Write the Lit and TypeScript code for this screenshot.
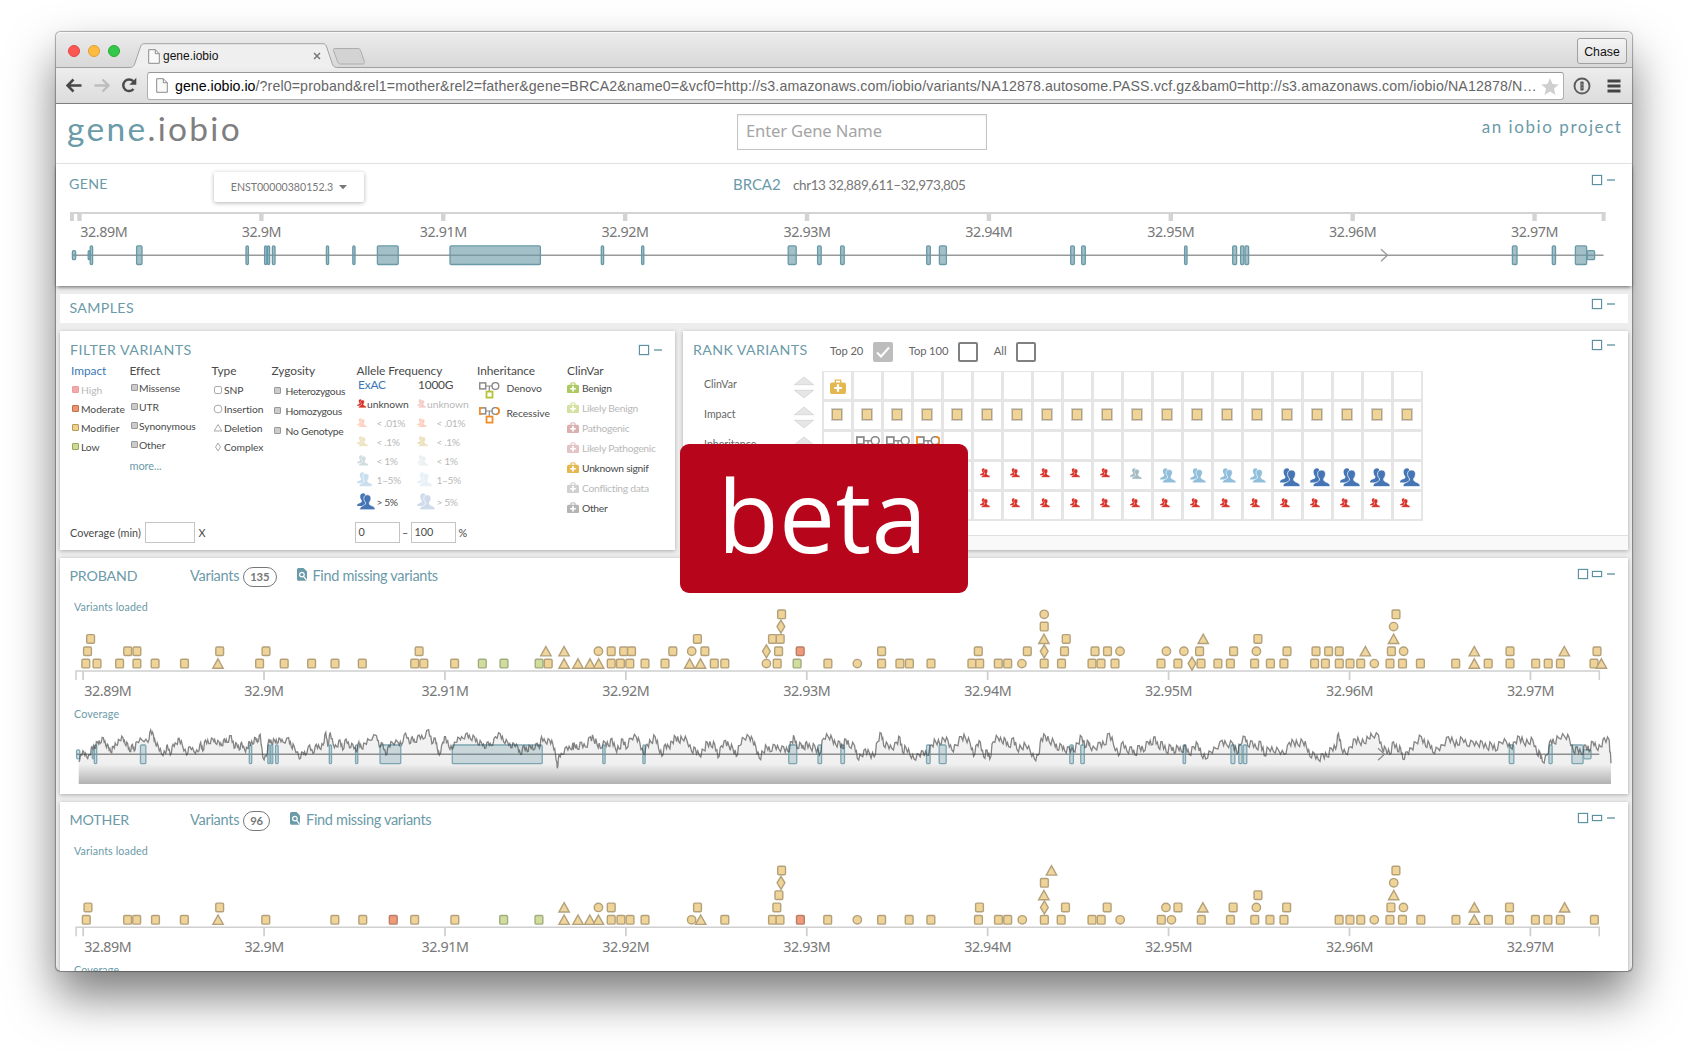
import { LitElement, html, svg, css, nothing } from "lit";
import { customElement, property } from "lit/decorators.js";

const TEAL = "#6b9aa8";

/* ---------- shared glyphs ---------- */

const people = (size: number, color: string, opacity = 1) => html`
  <svg width=${size} height=${size * 0.95} viewBox="0 0 20 19" style="opacity:${opacity}" fill=${color}>
    <path d="M7.4 0.3C4.6 0.3 3.4 2 3.6 4.2c0 1.900 1 3.300 1.800 4.200 0 1.500-.4 2-1.900 2.600C1.700 11.800 0 12 0 14.400h9V1z" />
    <path stroke="#fff" stroke-width="0.700" d="M11.500 2c3 0 4.100 1.800 3.900 4.400-.1 2-1 3.200-1.800 4.200 0 1.900.5 2.700 2.200 3.400 2.200.9 4.200 1.400 4.400 4.600H3c.2-3.200 2-3.700 4.200-4.600 1.700-.7 2.200-1.500 2.200-3.400-.8-1-1.700-2.200-1.800-4.200C7.400 3.800 8.500 2 11.500 2z" />
  </svg>`;

const kit = (size: number, color: string) => html`
  <svg width=${size} height=${size * 0.94} viewBox="0 0 16 15">
    <path d="M5.300 4V1.200h5.400V4" fill="none" stroke=${color} stroke-width="1.300" />
    <rect x="0" y="3.500" width="16" height="11.500" rx="2" fill=${color} />
    <path d="M8 5.200v7.600M4.200 9h7.600" stroke="#fff" stroke-width="2.200" />
  </svg>`;

const pedigree = (w: number, kind: "denovo" | "recessive") => {
  const rec = kind === "recessive";
  const g = "#8a8a8a";
  const o = "#f28c28";
  return html`
    <svg width=${w} height=${w * 0.8} viewBox="0 0 20.500 16.400" fill="none" stroke-width="1.500">
      <path d="M7 4h6.500M10.300 4v5.500" stroke=${g} stroke-width="1.200" />
      <rect x="0.700" y="0.900" width="6" height="6" stroke=${g} />
      <circle cx="16.400" cy="4" r="3.400" stroke=${g} stroke-width="1.400" />
      ${rec
        ? svg`<path d="M3 .9H.7v6H3" stroke=${o} stroke-width="1.600" />
            <path d="M17 .6a3.400 3.400 0 0 1 0 6.800" stroke=${o} stroke-width="1.600" />`
        : nothing}
      <rect x="7.500" y="9.600" width="6" height="6" stroke=${rec ? o : "#b5c334"} stroke-width="1.800" />
    </svg>`;
};

const pageIcon = html`
  <svg width="12" height="15" viewBox="0 0 12 15">
    <path d="M.7.700h6.600l4 4v9.600H.7z" fill="#fafafa" stroke="#8b8b8b" />
    <path d="M7.300.700v4h4" fill="none" stroke="#8b8b8b" />
  </svg>`;

/* ---------- genomic data (x is the plot coordinate) ---------- */

const EXONS: [number, number, boolean?][] = [
  [72.4, 75.6, true], [88.2, 90, true], [90.2, 92.6], [136.6, 142], [246, 248.400], [264.600, 266.800], [267.600, 269.600],
  [272.400, 275], [326.400, 328.600], [352.800, 355], [377.400, 398.200], [450, 540.400], [601.300, 603.600], [641.600, 643.800],
  [788.200, 796.200], [817.600, 821.200], [840.600, 844.200], [926.700, 930.300], [939.400, 946.400], [1070.700, 1074.300],
  [1081.700, 1085.300], [1184.600, 1187], [1232.700, 1236.600], [1240.600, 1243.800], [1245, 1248.600], [1512.400, 1517],
  [1552.300, 1555.500], [1575.400, 1586.600], [1587.200, 1594.600, true],
];

type Track = Record<string, number[]>[];

/* one entry per stacked row: s square, t triangle, c circle, d diamond, g low impact, o moderate impact */
const PROBAND: Track = [
  {
    s: [85.8, 97, 119.6, 136.9, 155.1, 184.5, 259.6, 284.2, 311.6, 335, 362.3, 414.7, 423.8, 454.6, 548.2, 611.2, 620.4, 629.8, 645,
      665, 714.3, 724.8, 777.2, 827.9, 881.6, 899.9, 909.4, 931, 971.9, 979.7, 998.3, 1007.7, 1044.2, 1061.5, 1092, 1101, 1115, 1161,
      1177.9, 1201, 1217.9, 1230.4, 1254.6, 1270.4, 1283.9, 1314.6, 1325.4, 1339.3, 1350, 1360.7, 1390, 1402.5, 1420.4, 1455.7, 1488.2,
      1510, 1535.7, 1548.2, 1560.4, 1594],
    t: [218, 564.1, 578, 590, 598.7, 689.7, 700.5, 1474.3, 1601.4],
    c: [766.4, 857.3, 1021.9, 1374.3],
    d: [1192],
    g: [482.3, 504, 539.1, 797.1],
  },
  {
    s: [87.5, 127.7, 136.9, 219.7, 266, 419.1, 611.2, 623.7, 631.5, 672.8, 704.9, 778.6, 881.6, 978.3, 1027.3, 1064.5, 1095, 1107.5,
      1199.6, 1233.6, 1287, 1316, 1328.6, 1339.3, 1391.4, 1510, 1597],
    t: [545.9, 564.1, 1365.4, 1474.3, 1564.3],
    c: [598.4, 691.7, 1120, 1166.4, 1183.9, 1256.4, 1403.6],
    d: [766.4, 1044.2],
    o: [800.2],
  },
  { s: [90.6, 697.4, 772.5, 780.2, 1066.2, 1257.9], t: [1043.9, 1203.2, 1393.6] },
  { s: [1044.2], c: [1393.6], d: [780.9] },
  { s: [781.6, 1396], c: [1044.2] },
];

const MOTHER: Track = [
  {
    s: [86.2, 127.5, 136.6, 155.4, 184.3, 265.7, 334.8, 362.7, 414.6, 454.8, 611.2, 620.9, 630, 645, 724.8, 772.5, 780, 827.7, 881.6,
      909.2, 930.9, 978.5, 998.5, 1007.7, 1044.4, 1061.2, 1092, 1101.2, 1161.3, 1201.3, 1230.5, 1254.8, 1270, 1284, 1339.2, 1350,
      1360.8, 1390, 1402.5, 1420.9, 1456, 1488.5, 1509.6, 1535.5, 1548, 1560.4, 1594.5],
    t: [218, 564.1, 578, 589.8, 598.4, 700.7, 1474.4],
    c: [691.6, 857.3, 1022.3, 1120.2, 1171.5, 1374.3],
    g: [503.6, 538.9],
    o: [393.2, 800.4],
  },
  {
    s: [87.9, 219.6, 611.2, 697.5, 776.8, 979.5, 1065.5, 1107.2, 1178, 1233.2, 1286.7, 1391, 1509.6],
    t: [564.1, 1202.9, 1474.4, 1564.7],
    c: [598.4, 1166, 1256.4, 1403.5],
    d: [1044.4],
  },
  { s: [778.9, 1258], t: [1043.9, 1393.8] },
  { s: [1044.4], c: [1393.8], d: [781] },
  { s: [781.6, 1396], t: [1051.5] },
];

/* read depth sampled in three windows: x/y pairs, scaled into the plot */
const DEPTH: { from: number; scale: number; pts: number[] }[] = [
  { from: 50, scale: 0.338, pts: [85,620,92,600,100,590,108,605,118,600,124,575,132,580,140,560,148,566,158,548,165,572,172,570,180,592,187,574,196,570,206,556,216,548,222,566,230,566,236,590,244,568,249,588,257,560,272,555,290,562,298,525,306,540,312,565,320,572,330,597,342,595,347,570,356,600,364,568,374,566,382,550,392,572,404,600,414,575,426,590,438,590,446,562,452,588,460,555,470,566,482,552,490,565,500,560,508,572,516,552,524,562,536,542,545,580,552,565,560,585,567,562,576,585,584,580,590,560,600,568,608,548,614,562,622,538,630,608,640,604,648,552,656,566,664,555,672,565,680,550,690,562,706,548,714,575,722,572,738,612,748,592,756,600,768,570,778,595,788,568,798,580,808,570,816,532,822,575,829,532,838,568,848,575,858,555,866,585,876,552,886,578,896,568,906,590,914,560,922,580,932,565,944,555,966,542,974,575,984,565,994,600,1002,572,1012,562,1030,562,1040,570,1052,534,1064,566,1072,545,1080,562,1092,540,1104,552,1120,524,1130,566,1140,550,1146,580,1152,600,1162,562,1170,545,1180,575,1190,582,1200,562,1210,548,1222,550,1234,534,1244,552,1256,545,1266,568,1276,562,1286,580,1296,560,1306,572,1318,545,1332,536,1342,560,1354,562,1364,578,1372,565,1384,575,1392,598,1402,572,1412,590,1420,572,1430,585,1442,565,1448,580,1454,545,1466,562,1478,555,1488,568,1496,600,1501,640,1506,600,1516,598,1528,575,1540,582,1550,568] },
  { from: 570, scale: 0.338, pts: [8,580,14,570,22,582,34,562,46,576,60,545,70,552,80,568,90,580,104,562,114,572,124,550,134,580,146,582,156,552,166,582,180,550,196,545,206,560,218,598,228,568,240,562,252,545,262,580,272,604,282,568,292,575,302,560,312,545,322,560,332,552,346,556,360,590,370,578,382,600,396,585,406,562,418,575,428,568,438,608,448,572,460,556,470,572,482,580,492,604,502,572,514,550,530,545,540,552,550,576,560,610,572,592,582,575,592,590,606,570,618,582,632,575,645,590,656,560,664,548,672,580,684,568,692,582,700,560,712,580,724,572,738,600,750,550,764,545,776,552,786,568,798,560,806,580,816,552,826,575,842,572,850,610,862,602,874,582,886,595,900,605,910,560,921,535,928,572,940,568,952,580,966,562,976,546,984,592,994,578,1006,600,1018,612,1032,598,1044,588,1056,600,1070,570,1082,560,1094,568,1106,552,1118,556,1130,585,1142,570,1158,545,1170,550,1184,565,1194,604,1204,568,1214,560,1224,606,1234,585,1242,612,1252,560,1266,548,1278,562,1288,552,1298,575,1312,548,1322,582,1336,580,1348,570,1362,590,1374,612,1386,600,1394,550,1406,542,1418,560,1432,562,1442,585,1454,570,1464,588,1476,575,1490,588,1502,565,1514,545,1524,578,1534,560] },
  { from: 1090, scale: 0.3571, pts: [0,575,14,580,28,562,40,570,54,535,66,570,80,602,92,560,104,590,116,575,126,600,138,572,150,590,162,560,172,570,182,545,192,578,202,560,214,592,226,572,236,595,246,575,256,590,268,570,278,598,290,575,302,568,312,600,324,612,338,590,352,580,370,556,382,568,400,565,412,596,420,570,434,545,442,572,454,558,466,580,478,560,488,602,500,580,514,590,528,585,544,598,558,562,570,560,582,568,596,560,606,575,616,605,628,595,640,615,652,596,664,605,676,580,688,582,696,535,704,580,716,595,730,575,742,552,754,560,768,565,780,550,790,542,808,540,818,580,828,580,840,598,850,560,862,590,870,580,876,612,888,590,900,580,912,562,928,545,940,575,950,565,960,592,974,580,988,570,1004,545,1018,562,1030,570,1042,550,1056,572,1072,560,1086,568,1098,560,1112,580,1124,566,1136,588,1150,562,1166,560,1178,578,1190,560,1202,545,1214,562,1228,565,1240,555,1252,598,1260,592,1267,620,1280,600,1290,555,1300,565,1312,548,1330,546,1342,548,1354,590,1364,575,1376,598,1388,570,1398,590,1408,560,1418,580,1430,575,1440,548,1454,555,1459,625] },
];

const depthLine = (() => {
  const out: string[] = [];
  let prev: [number, number] | null = null;
  let k = 0;
  for (const seg of DEPTH) {
    for (let i = 0; i < seg.pts.length; i += 2) {
      const x = seg.from + seg.pts[i] * seg.scale;
      const y = seg.pts[i + 1] / 3 - 166;
      if (prev) {
        const [px, py] = prev;
        const amp = seg.scale > 0.35 || seg.from > 500 ? 3.8 : 2.6;
        for (const f of [0.35, 0.65]) {
          const jitter = (f < 0.5 ? 1 : -1) * (0.35 + 0.65 * Math.abs(Math.sin(k * 12.9898 + f * 7))) * amp;
          out.push(`${(px + (x - px) * f).toFixed(1)},${(py + (y - py) * f + jitter).toFixed(1)}`);
        }
      }
      out.push(`${x.toFixed(1)},${y.toFixed(1)}`);
      prev = [x, y];
      k++;
    }
  }
  return out.join(" ");
})();

const exonRects = (mid: number, fillOpacity: number, map: (x: number) => number) =>
  EXONS.map(([a, b, small]) => {
    const h = small ? 9 : 18.6;
    const x = map(a);
    return svg`<rect x=${x} y=${mid - h / 2} width=${Math.max(1.2, map(b) - x)} height=${h} rx="1.2"
      fill=${TEAL} fill-opacity=${fillOpacity} stroke="#6899a7" stroke-width="1.300" />`;
  });

const LABELS = ["32.89M", "32.9M", "32.91M", "32.92M", "32.93M", "32.94M", "32.95M", "32.96M", "32.97M"];

/* ---------- window size controls ---------- */

@customElement("size-controls")
class SizeControls extends LitElement {
  @property({ type: Boolean }) wide = false;
  static styles = css`
    :host { display: flex; align-items: center; gap: 4px; height: 12px; }
    .box { width: 8px; height: 8px; border: 1px solid #5d91a1; box-shadow: 0 0 0 0.5px #c6dbe1; }
    .bar { width: 8px; height: 4px; border: 1px solid #5d91a1; box-shadow: 0 0 0 0.5px #c6dbe1; }
    .dash { width: 8px; height: 2px; background: #94b7c1; margin-left: 1px; }
  `;
  render() {
    return html`<span class="box"></span>${this.wide ? html`<span class="bar"></span>` : nothing}<span class="dash"></span>`;
  }
}

/* ---------- sample card ---------- */

@customElement("sample-card")
class SampleCard extends LitElement {
  @property() name = "";
  @property({ type: Number }) count = 0;
  @property({ type: Number }) extra = 0;
  @property({ attribute: false }) track: Track = [];

  static styles = css`
    :host { display: block; flex: none; background: #fff; box-shadow: 0 1px 4px rgba(0, 0, 0, 0.28); font-family: Lato, sans-serif; color: #6b9aa8; }
    .head { display: flex; height: 40px; align-items: flex-start; box-sizing: border-box; padding: 7px 13px 0 9.500px; line-height: 20px; }
    .name { width: 120.500px; font-size: 14.200px; letter-spacing: -0.150px; padding-top: 0.500px; }
    .variants { font-size: 14.500px; margin-right: 4px; letter-spacing: -0.280px; padding-top: 0.500px; }
    .count { box-sizing: border-box; height: 20px; border: 1px solid #777; border-radius: 10px; padding: 0 6px; font-size: 11.300px; font-weight: 700; line-height: 17px; color: #777; margin: 2px 20px 0 0; letter-spacing: -0.100px; }
    .find { display: flex; font-size: 14.500px; gap: 6px; letter-spacing: -0.320px; padding-top: 0.500px; }
    .find svg { margin-top: 2px; }
    size-controls { margin: 3px 0 0 auto; }
    .caption { font-size: 10.700px; letter-spacing: 0.120px; padding-left: 14px; }
    .loaded { height: 12px; line-height: 17px; }
    .cov { height: 16px; line-height: 17px; }
    svg { display: block; overflow: visible; }
    text { font-family: "Noto Sans", sans-serif; font-size: 14.300px; fill: #777; letter-spacing: -0.400px; }
    .bottom { height: 73px; }
  `;

  private glyph(kind: string, x: number, y: number) {
    const fill = kind === "g" ? "#d0de9d" : kind === "o" ? "#f09a7a" : "#efd397";
    const st = kind === "g" ? "#a3ab80" : kind === "o" ? "#b87f69" : "#b3a17c";
    switch (kind) {
      case "t":
        return svg`<path d="M${x} ${y - 4.8}L${x + 5.2} ${y + 4.6}H${x - 5.2}z" fill=${fill} stroke=${st} stroke-width="1.400" fill-opacity=".95" />`;
      case "c":
        return svg`<circle cx=${x} cy=${y} r="4.200" fill=${fill} stroke=${st} stroke-width="1.400" />`;
      case "d":
        return svg`<path d="M${x} ${y - 6.500}L${x + 3.9} ${y}L${x} ${y + 6.500}L${x - 3.9} ${y}z" fill=${fill} stroke=${st} stroke-width="1.400" />`;
      default:
        return svg`<rect x=${x - 3.9} y=${y - 4.300} width="7.800" height="8.600" rx="1.200" fill=${fill} stroke=${st} stroke-width="1.400" />`;
    }
  }

  render() {
    const axis = 61 + this.extra;
    const cut = (x: number) => 76.2 + (x - 72) * 0.9949;
    return html`
      <div class="head">
        <span class="name">${this.name}</span>
        <span class="variants">Variants</span>
        <span class="count">${this.count}</span>
        <span class="find">
          <svg width="10" height="13" viewBox="0 0 10 13">
            <path d="M0 1.500Q0 0 1.500 0h5L10 3.500v8q0 1-1.500 1.300h-7Q0 12.800 0 11.300z" fill=${TEAL} />
            <circle cx="4.900" cy="6.600" r="2.300" fill="none" stroke="#fff" stroke-width="1.200" />
            <path d="M6.500 8.400l3 3.600" stroke="#fff" stroke-width="1.200" />
          </svg>
          <span>Find missing variants</span>
        </span>
        <size-controls wide></size-controls>
      </div>
      <div class="caption loaded">Variants loaded</div>
      <svg width="1568" height=${95 + this.extra} viewBox="60 0 1568 ${95 + this.extra}">
        <path d="M76 ${axis + 9}V${axis}H1599.300V${axis + 9}" fill="none" stroke="#d0d0d0" stroke-width="1.600" />
        ${LABELS.map((l, i) => {
          const x = 83.1 + i * 180.92;
          return svg`<path d="M${x} ${axis}v9" stroke="#d0d0d0" stroke-width="1.800" />
            <text x=${i === 0 ? 107.8 : x} y=${axis + 25.3} text-anchor="middle">${l}</text>`;
        })}
        ${this.track.map((row, r) =>
          Object.entries(row).map(([kind, xs]) => xs.map((x) => this.glyph(kind, x, axis - 7.400 - r * 12.330))),
        )}
      </svg>
      <div class="caption cov">Coverage</div>
      <svg class="bottom" width="1568" height="73" viewBox="60 0 1568 73">
        <defs>
          <linearGradient id="depth" gradientUnits="userSpaceOnUse" x1="0" x2="0" y1="0" y2="63">
            <stop offset="0" stop-color="#f3f3f3" /><stop offset=".68" stop-color="#f0f0f0" /><stop offset="1" stop-color="#b2b2b2" />
          </linearGradient>
        </defs>
        <polygon points="78.700,63 ${depthLine} 1611,63" fill="url(#depth)" />
        <path d="M76 33.300H1599.300" stroke="#8d8d8d" stroke-width="1.400" />
        <path d="M1378 27.300l6.500 6-6.500 6" fill="none" stroke="#8d8d8d" stroke-width="1.200" />
        <g opacity=".85">${exonRects(33.3, 0.35, cut)}</g>
        <polyline points=${depthLine} fill="none" stroke="#3c3c3c" stroke-opacity=".62" stroke-width="1.300" />
      </svg>`;
  }
}

/* ---------- filter card ---------- */

@customElement("filter-card")
class FilterCard extends LitElement {
  static styles = css`
    :host { display: flex; flex-direction: column; box-sizing: border-box; width: 615px; height: 219px; background: #fff; box-shadow: 0 1px 4px rgba(0, 0, 0, 0.28); padding: 9px 13px 7px 11px; font-family: Lato, sans-serif; color: #4a4a4a; }
    svg { display: block; flex: none; }
    .top { display: flex; justify-content: space-between; height: 22px; line-height: 20px; font-size: 14.200px; letter-spacing: 0.500px; color: #6b9aa8; }
    .top span { margin-left: -1px; }
    size-controls { margin-top: 4px; }
    .cols { display: grid; grid-template-columns: 58.500px 82px 60px 85px 120.500px 90px 1fr; }
    h4 { margin: 0; font-size: 11.900px; font-weight: 400; line-height: 18px; height: 16px; white-space: nowrap; letter-spacing: -0.050px; }
    .on { color: #3a78b5; }
    .list { display: flex; flex-direction: column; font-size: 10.300px; white-space: nowrap; letter-spacing: -0.050px; }
    .item { display: flex; align-items: center; height: 19px; flex: none; }
    .tall .item { height: 20px; }
    .impact { padding-top: 2.500px; }
    .effect { padding-top: 0.500px; letter-spacing: -0.100px; }
    .type { padding-top: 2.500px; }
    .zyg { padding-top: 2.500px; letter-spacing: -0.250px; }
    .sq { width: 5px; height: 5px; border: 1px solid #999; background: #ccc; border-radius: 1px; flex: none; }
    .impact .sq { margin: 0 2px 2px 1px; }
    .effect .sq { margin: 0 1.500px 2px 1px; }
    .zyg .sq { margin: 0 4.500px 1px 2.500px; }
    .type svg { width: 12px; margin-right: 0.500px; }
    .sq.high { background: #f2a9a9; border-color: #eb9d9d; }
    .sq.moderate { background: #f0936f; border-color: #c0704f; }
    .sq.modifier { background: #efd18b; border-color: #b49a5c; }
    .sq.low { background: #cddc91; border-color: #96a560; }
    .off { color: #b9b9b9; }
    .more { font-size: 11px; color: #6b9aa8; padding-top: 1px; }
    .pair { display: grid; grid-template-columns: 60px 1fr; }
    .pair h4 { margin-top: -2px; height: 18px; padding-left: 1.500px; letter-spacing: -0.200px; }
    .freq .item { gap: 0; letter-spacing: -0.450px; }
    .freq .item:first-child { letter-spacing: -0.050px; }
    .freq .ico { width: 20px; }
    .freq .first { width: 10.500px; }
    .freq .last { height: 25px; }
    .inh .item { height: 25px; gap: 7px; }
    .inh .item span { margin-top: -5px; }
    .inh { padding-left: 2px; }
    .clin .item { gap: 3px; letter-spacing: -0.280px; }
    .clin { margin-top: -0.500px; }
    .foot { display: flex; margin-top: auto; height: 21px; align-items: center; font-size: 10.800px; }
    .field { box-sizing: border-box; height: 21px; border: 1px solid #c4c4c4; line-height: 18px; padding-left: 3px; }
    .cov { width: 50px; margin: 0 4px 0 1px; }
    .num { width: 45px; }
    .lead { width: 73.500px; margin-left: -1px; letter-spacing: 0.030px; }
    .min { margin-left: 149px; }
    .sep { width: 11px; text-align: center; }
    .pct { margin-left: 3px; }
  `;
  render() {
    const item = (cls: string, text: string, off = false) =>
      html`<div class="item"><span class="sq ${cls}"></span><span class=${off ? "off" : ""}>${text}</span></div>`;
    const shape = (d: unknown, text: string) =>
      html`<div class="item"><svg width="12" height="11" viewBox="0 0 12 11" fill="#fff" stroke="#aaa">${d}</svg><span>${text}</span></div>`;
    const freq: [string, number, string][] = [
      ["unknown", 9.5, "#d73027"], ["< .01%", 10, "#fbb394"], ["< .1%", 11, "#e2cf98"], ["< 1%", 11.5, "#b3c6cb"], ["1–5%", 15.5, "#a8cbe4"], ["> 5%", 18, "#4575b4"],
    ];
    const freqCol = (second: boolean) => html`
      <div class="list freq">
        ${freq.map(([t, s, c], i) => {
          const live = !second && (i === 0 || i === 5);
          const op = live ? 1 : second && (i === 0 || i > 2) ? 0.25 : second ? 0.62 : 0.6;
          return html`<div class="item ${i === 5 ? "last" : ""}">
            <span class="ico ${i === 0 ? "first" : ""}">${people(s, c, op)}</span>
            <span class=${live ? "" : "off"}>${t}</span></div>`;
        })}
      </div>`;
    const clin: [string, string, boolean][] = [
      ["Benign", "#adca62", false], ["Likely Benign", "#d3e2a2", true], ["Pathogenic", "#d9b1b1", true], ["Likely Pathogenic", "#e2c4c7", true],
      ["Unknown signif", "#e4b751", false], ["Conflicting data", "#d0d0d0", true], ["Other", "#b5b5b5", false],
    ];
    return html`
      <div class="top"><span>FILTER VARIANTS</span><size-controls></size-controls></div>
      <div class="cols">
        <div><h4 class="on">Impact</h4>
          <div class="list impact">${item("high", "High", true)}${item("moderate", "Moderate")}${item("modifier", "Modifier")}${item("low", "Low")}</div></div>
        <div><h4>Effect</h4>
          <div class="list effect">${["Missense", "UTR", "Synonymous", "Other"].map((t) => item("", t))}<div class="item more">more...</div></div></div>
        <div><h4>Type</h4>
          <div class="list type">
            ${shape(svg`<rect x="2.500" y="1.500" width="7" height="7" rx="1.500" />`, "SNP")}
            ${shape(svg`<circle cx="6" cy="5" r="3.900" />`, "Insertion")}
            ${shape(svg`<path d="M6 1.500l3.800 6.500H2.200z" />`, "Deletion")}
            ${shape(svg`<path d="M6 1l2.500 4L6 9 3.500 5z" />`, "Complex")}
          </div></div>
        <div><h4>Zygosity</h4>
          <div class="list zyg tall">${["Heterozygous", "Homozygous", "No Genotype"].map((t) => item("", t))}</div></div>
        <div><h4>Allele Frequency</h4>
          <div class="pair"><h4 class="on">ExAC</h4><h4>1000G</h4>${freqCol(false)}${freqCol(true)}</div></div>
        <div><h4>Inheritance</h4>
          <div class="list inh">
            <div class="item">${pedigree(20.5, "denovo")}<span>Denovo</span></div>
            <div class="item">${pedigree(20.5, "recessive")}<span>Recessive</span></div>
          </div></div>
        <div><h4>ClinVar</h4>
          <div class="list clin tall">${clin.map(([t, c, off]) => html`<div class="item">${kit(12, c)}<span class=${off ? "off" : ""}>${t}</span></div>`)}</div></div>
      </div>
      <div class="foot">
        <span class="lead">Coverage (min)</span><span class="field cov"></span><span>X</span>
        <span class="field num min">0</span><span class="sep">–</span><span class="field num">100</span><span class="pct">%</span>
      </div>`;
  }
}

/* ---------- rank card ---------- */

@customElement("rank-card")
class RankCard extends LitElement {
  static styles = css`
    :host { display: flex; flex-direction: column; box-sizing: border-box; width: 945px; height: 219px; background: #fff; box-shadow: 0 1px 4px rgba(0, 0, 0, 0.28); font-family: Lato, sans-serif; color: #666; }
    svg { display: block; }
    .top { display: flex; height: 40px; box-sizing: border-box; padding: 9px 13px 0 10px; line-height: 20px; font-size: 11.200px; letter-spacing: -0.080px; }
    .title { width: 137px; font-size: 14.200px; letter-spacing: 0.380px; color: #6b9aa8; }
    .box { box-sizing: border-box; width: 20px; height: 20px; border: 2px solid #808080; border-radius: 2px; margin: 2px 16px 0 9.500px; }
    .checked { border: none; background: #bdbdbd; }
    .opt { padding-top: 0.500px; }
    size-controls { margin: -1px 0 0 auto; }
    .body { display: flex; flex: 1; padding-left: 21px; }
    .labels { width: 118px; padding-top: 1px; }
    .label { display: flex; height: 30px; justify-content: space-between; font-size: 10.600px; line-height: 25px; padding-right: 8px; }
    .label svg { margin-top: 3.500px; }
    .grid { display: grid; grid-template-columns: repeat(20, 27px); grid-auto-rows: 27px; gap: 3px; padding: 1px 2px 2px; background: #e5e5e5; align-self: flex-start; }
    .cell { background: #fff; display: flex; align-items: flex-start; }
    .imp { padding: 7px 0 0 8px; }
    .freq { padding: 6px 0 0 6px; }
    .kit { padding: 7px 0 0 6px; }
    .ped { padding: 4px 0 0 1.500px; }
    .sq { width: 8px; height: 9px; background: #efd397; border: 1px solid #b3a17c; box-shadow: 0 0 0 1px #d2d2d2; }
    .foot { height: 14px; background: #f9f9f9; border-top: 1px solid #e0e0e0; }
  `;
  render() {
    const sorter = html`<svg width="20" height="22" viewBox="0 0 20 22">
      <path d="M10 1L19.500 8.700H.5zM.5 14.300h19L10 22z" fill="#e6e6e6" stroke="#cfcfcf" stroke-width=".7" /></svg>`;
    const cells = [];
    for (let r = 0; r < 5; r++) {
      for (let c = 0; c < 20; c++) {
        let inner: unknown = nothing;
        let cls = "";
        if (r === 0 && c === 0) { inner = kit(16, "#e4b751"); cls = "kit"; }
        if (r === 1) { inner = html`<span class="sq"></span>`; cls = "imp"; }
        if (r === 2 && c > 0 && c < 4) { inner = pedigree(24, c === 3 ? "recessive" : "denovo"); cls = "ped"; }
        if (r > 2 && c > 4) {
          cls = "freq";
          inner = r === 4 || c < 10 ? people(10, "#d73027") : c === 10 ? people(12, "#a3bcc3") : c < 15 ? people(16, "#91bfdb") : people(20, "#4575b4");
        }
        cells.push(html`<div class="cell ${cls}">${inner}</div>`);
      }
    }
    return html`
      <div class="top">
        <span class="title">RANK VARIANTS</span>
        <span class="opt">Top 20</span>
        <span class="box checked"><svg width="20" height="20" viewBox="0 0 20 20"><path d="M4 10.500l4 4 8-9" fill="none" stroke="#fff" stroke-width="2" /></svg></span>
        <span class="opt">Top 100</span><span class="box"></span>
        <span class="opt">All</span><span class="box"></span>
        <size-controls></size-controls>
      </div>
      <div class="body">
        <div class="labels">${["ClinVar", "Impact", "Inheritance"].map((t) => html`<div class="label"><span>${t}</span>${sorter}</div>`)}</div>
        <div class="grid">${cells}</div>
      </div>
      <div class="foot"></div>`;
  }
}

/* ---------- page ---------- */

@customElement("app-root")
class AppRoot extends LitElement {
  static styles = css`
    :host { display: block; position: relative; box-sizing: border-box; width: 1688px; height: 1051px; overflow: hidden; background: #fff; padding: 32px 56px 80px; font-family: Lato, sans-serif; }
    svg { display: block; flex: none; }
    .window { display: flex; flex-direction: column; width: 1576px; height: 939px; border-radius: 5px; box-shadow: 0 0 1px 0.500px rgba(0, 0, 0, 0.32), 0 25px 48px rgba(0, 0, 0, 0.52); background: #ededed; }
    .tabs { display: flex; height: 35px; flex: none; border-bottom: 1px solid #a0a0a0; border-radius: 5px 5px 0 0; background: linear-gradient(#ececec, #d8d8d8); box-shadow: inset 0 1px #f6f6f6; padding-left: 12px; padding-right: 5px; font-family: "Liberation Sans", sans-serif; }
    .lights { display: flex; gap: 8px; padding-top: 13px; width: 61px; }
    .lights span { width: 12px; height: 12px; border-radius: 50%; flex: none; box-sizing: border-box; }
    .r { background: #fc5753; border: 1px solid #df4744; }
    .y { background: #fdbc40; border: 1px solid #de9f34; }
    .g { background: #34c84a; border: 1px solid #27aa35; }
    .tab { display: grid; width: 212px; height: 36px; }
    .tab > * { grid-area: 1 / 1; }
    .tabrow { display: flex; padding: 17px 20px 0 19px; align-items: flex-start; font-size: 12px; line-height: 14px; color: #111; }
    .tabrow .t { margin: 0 auto 0 3px; letter-spacing: 0; }
    .tabrow .x { margin-top: 3px; }
    .newtab { margin: 16px auto 0 -9px; }
    .user { box-sizing: border-box; width: 50px; height: 26px; margin-top: 6px; border: 1px solid #a0a0a0; border-radius: 3px; background: linear-gradient(#f4f4f4, #e2e2e2); font-size: 12.300px; line-height: 26px; text-align: center; color: #111; }
    .bar { display: flex; box-sizing: border-box; height: 36px; flex: none; border-bottom: 1px solid #7e7e7e; background: linear-gradient(#ededed, #dcdcdc); padding: 4px 11px 0 10px; font-family: "Liberation Sans", sans-serif; }
    .nav { display: flex; width: 82px; gap: 12px; padding-top: 5px; }
    .nav svg:last-child { margin-left: -1px; }
    .omni { display: flex; box-sizing: border-box; width: 1417px; height: 28px; border: 1px solid #b0b0b0; border-top-color: #989898; border-radius: 3px; background: #fff; padding: 5px 4px 0 8px; }
    .url { width: 1366px; font-size: 14.200px; line-height: 16px; margin-left: 7px; color: #666; white-space: nowrap; letter-spacing: 0.124px; }
    .url b { font-weight: 400; color: #000; letter-spacing: 0; }
    .tools { display: flex; margin-left: 9px; gap: 16px; padding-top: 5px; }
    .header { display: flex; box-sizing: border-box; flex: none; height: 60px; border-bottom: 1px solid #e9e9e9; background: #fff; padding: 0 11px; align-items: flex-start; }
    .logo { width: 670px; font-size: 33.500px; line-height: 40px; letter-spacing: 2.300px; color: #6b9aa8; padding-top: 3.500px; }
    .logo span { color: #7f7f7f; }
    .search { box-sizing: border-box; width: 250px; height: 36px; margin-top: 10px; border: 1px solid #c4c4c4; box-shadow: inset 0 1px 2px rgba(0, 0, 0, 0.08); padding-left: 8px; font-family: "Noto Sans", sans-serif; font-size: 16.600px; line-height: 32px; color: #a5a5a5; letter-spacing: -0.150px; }
    .tag { margin-left: auto; font-size: 17px; line-height: 24px; padding-top: 11px; letter-spacing: 1.560px; margin-right: -1.500px; color: #6b9aa8; }
    .gene { flex: none; box-sizing: border-box; height: 122px; background: #fff; box-shadow: 0 2px 4px -1px rgba(0, 0, 0, 0.6); }
    .genehead { display: flex; height: 46px; box-sizing: border-box; padding: 8px 17px 0 13px; line-height: 20px; }
    .ttl { width: 144.500px; font-size: 14.200px; letter-spacing: 0.300px; color: #6b9aa8; padding-top: 2px; }
    .drop { display: flex; box-sizing: border-box; width: 150px; height: 30px; border-radius: 2px; box-shadow: 0 1px 4px rgba(0, 0, 0, 0.3); justify-content: center; align-items: center; gap: 6px; font-size: 10.600px; color: #777; padding-left: 1px; }
    .brca { margin-left: 369.500px; font-size: 15px; padding-top: 2px; color: #6b9aa8; letter-spacing: -0.050px; width: 60px; }
    .loc { font-size: 13.500px; padding-top: 2.500px; color: #777; letter-spacing: -0.410px; }
    .genehead size-controls { margin: 2px 0 0 auto; }
    .axis { font-family: "Noto Sans", sans-serif; font-size: 14.300px; letter-spacing: -0.400px; fill: #777; }
    .samples { display: flex; flex: none; height: 29px; margin: 8px 4px 0; background: #fff; justify-content: space-between; padding: 0 13px 0 9.500px; font-size: 14.200px; letter-spacing: 0.350px; line-height: 28px; color: #6b9aa8; box-sizing: border-box; }
    .samples size-controls { margin-top: 4px; }
    .cards { display: flex; gap: 8px; padding: 8px 4px 0; flex: none; }
    .scroll { display: flex; flex-direction: column; gap: 8px; padding: 8px 4px 0; height: 421px; box-sizing: border-box; overflow: hidden; border-radius: 0 0 4px 4px; }
    .beta { position: absolute; left: 680px; top: 444px; width: 288px; height: 149px; border-radius: 9px; background: #b7061b; color: #fff; font-family: "Open Sans", sans-serif; font-size: 100px; line-height: 141px; text-align: center; letter-spacing: 0.400px; text-indent: -3px; }
  `;

  render() {
    return html`
      <div class="window">
        <div class="tabs">
          <div class="lights"><span class="r"></span><span class="y"></span><span class="g"></span></div>
          <div class="tab">
            <svg width="212" height="36" viewBox="0 0 212 36">
              <path d="M0 36V35.500C4 35.500 5 34 6 31L11 16C12 13 13 11.700 15 11.700H194C196 11.700 197 13 198 16L203 31C204 34 205 35.500 209 35.500V36z" fill="#efefef" />
              <path d="M0 35.500C4 35.500 5 34 6 31L11 16C12 13 13 11.700 15 11.700H194C196 11.700 197 13 198 16L203 31C204 34 205 35.500 209 35.500" fill="none" stroke="#a3a3a3" />
            </svg>
            <div class="tabrow">${pageIcon}<span class="t">gene.iobio</span>
              <svg class="x" width="8" height="8" viewBox="0 0 8 8"><path d="M1 1l6 6M7 1L1 7" stroke="#777" stroke-width="1.500" /></svg>
            </div>
          </div>
          <svg class="newtab" width="34" height="17" viewBox="0 0 34 17">
            <path d="M3 .5h23c1.500 0 2.200.8 2.700 2.200l3.600 11c.4 1.300-.2 2.300-1.600 2.300H8.500c-1.700 0-2.300-.9-2.800-2.200L1.500 2.700C1 1.400 1.500.5 3 .5z" fill="#d3d3d3" stroke="#adadad" />
          </svg>
          <div class="user">Chase</div>
        </div>
        <div class="bar">
          <div class="nav">
            <svg width="16" height="16" viewBox="0 0 16 16"><path d="M15.500 8.500H2M7.500 2.500l-6 6 6 6" fill="none" stroke="#484848" stroke-width="2.500" /></svg>
            <svg width="16" height="16" viewBox="0 0 16 16"><path d="M.5 8.500H14M8.500 2.500l6 6-6 6" fill="none" stroke="#bdbdbd" stroke-width="2.400" /></svg>
            <svg width="16" height="16" viewBox="0 0 16 16"><path d="M12.500 12A5.800 5.800 0 1 1 12.200 4.200" fill="none" stroke="#4a4a4a" stroke-width="2.500" /><path d="M15.300.8v7H8.300z" fill="#4a4a4a" /></svg>
          </div>
          <div class="omni">
            ${pageIcon}
            <div class="url"><b>gene.iobio.io</b>/?rel0=proband&amp;rel1=mother&amp;rel2=father&amp;gene=BRCA2&amp;name0=&amp;vcf0=http://s3.amazonaws.com/iobio/variants/NA12878.autosome.PASS.vcf.gz&amp;bam0=http://s3.amazonaws.com/iobio/NA12878/N…</div>
            <svg width="18" height="17" viewBox="0 0 18 17"><path d="M9 0l2.500 5.900 6.300.5-4.800 4.200 1.500 6.300L9 13.500l-5.500 3.400L5 10.600.2 6.400l6.300-.5z" fill="#cfcfcf" /></svg>
          </div>
          <div class="tools">
            <svg width="18" height="18" viewBox="0 0 18 18"><circle cx="9" cy="9" r="7.500" fill="none" stroke="#5b5b5b" stroke-width="1.900" /><rect x="7.400" y="4.500" width="3.200" height="9" rx=".8" fill="#555" /><path d="M9 6.500v2M9 10v1.500" stroke="#bbb" stroke-width=".8" /></svg>
            <svg width="14" height="18" viewBox="0 0 14 18"><path d="M.5 4h13M.5 9h13M.5 14h13" stroke="#444" stroke-width="3" /></svg>
          </div>
        </div>

        <div class="header">
          <div class="logo">gene<span>.iobio</span></div>
          <div class="search">Enter Gene Name</div>
          <div class="tag">an iobio project</div>
        </div>

        <div class="gene">
          <div class="genehead">
            <span class="ttl">GENE</span>
            <span class="drop">ENST00000380152.3<svg width="8" height="5" viewBox="0 0 8 5"><path d="M0 0h8L4 4.300z" fill="#777" /></svg></span>
            <span class="brca">BRCA2</span><span class="loc">chr13 32,889,611–32,973,805</span>
            <size-controls></size-controls>
          </div>
          <svg width="1576" height="74" viewBox="56 210 1576 74">
            <path d="M70.200 213H1605.600" stroke="#d3d3d3" stroke-width="2" />
            <path d="M72 213v8M1603.600 213v8" stroke="#d3d3d3" stroke-width="4" />
            ${LABELS.map((l, i) => {
              const x = 79.5 + i * 181.88;
              return svg`<path d="M${x} 213v8" stroke="#d3d3d3" stroke-width="4.400" />
                <text class="axis" x=${i === 0 ? 103.8 : x} y="237.300" text-anchor="middle">${l}</text>`;
            })}
            <path d="M72 255.300H1603.600" stroke="#999" stroke-width="1.400" />
            <path d="M1381 249.300l6.500 6-6.500 6" fill="none" stroke="#999" stroke-width="1.300" />
            ${exonRects(255.2, 0.62, (x) => x)}
          </svg>
        </div>

        <div class="samples"><span>SAMPLES</span><size-controls></size-controls></div>

        <div class="cards"><filter-card></filter-card><rank-card></rank-card></div>

        <div class="scroll">
          <sample-card name="PROBAND" .count=${135} .track=${PROBAND}></sample-card>
          <sample-card name="MOTHER" .count=${96} .extra=${12.2} .track=${MOTHER}></sample-card>
        </div>
      </div>
      <div class="beta">beta</div>`;
  }
}
